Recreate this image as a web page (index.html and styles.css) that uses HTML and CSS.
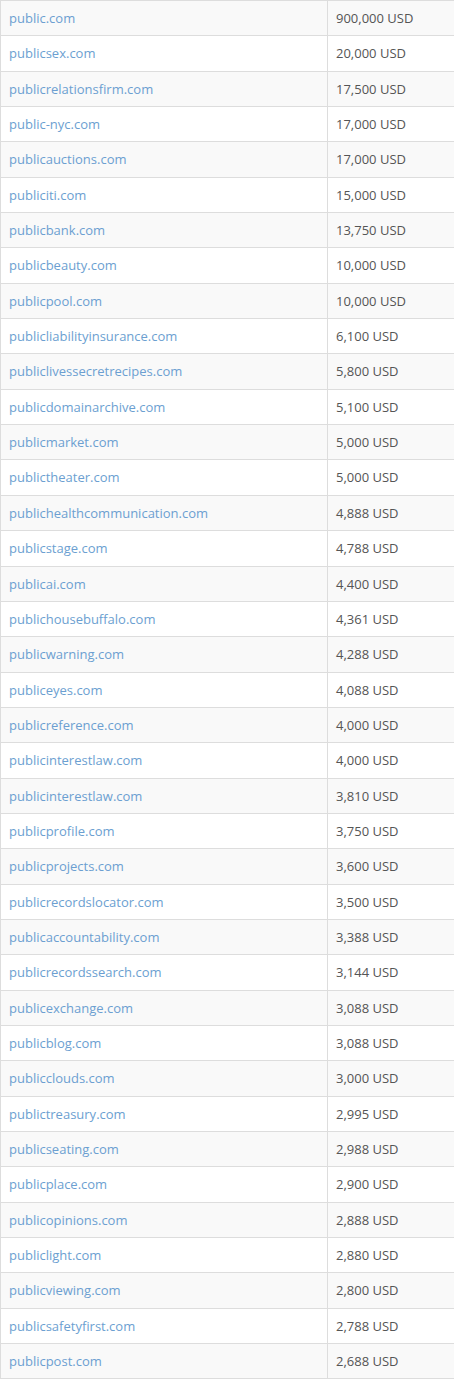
FILE: index.html
```html
<!DOCTYPE html>
<html>
<head>
<meta charset="utf-8">
<link rel="stylesheet" href="styles.css">
</head>
<body>
<table class="domains">
<tbody>
<tr><td class="name"><a href="#">public.com</a></td><td class="price">900,000 USD</td></tr>
<tr><td class="name"><a href="#">publicsex.com</a></td><td class="price">20,000 USD</td></tr>
<tr><td class="name"><a href="#">publicrelationsfirm.com</a></td><td class="price">17,500 USD</td></tr>
<tr><td class="name"><a href="#">public-nyc.com</a></td><td class="price">17,000 USD</td></tr>
<tr><td class="name"><a href="#">publicauctions.com</a></td><td class="price">17,000 USD</td></tr>
<tr><td class="name"><a href="#">publiciti.com</a></td><td class="price">15,000 USD</td></tr>
<tr><td class="name"><a href="#">publicbank.com</a></td><td class="price">13,750 USD</td></tr>
<tr><td class="name"><a href="#">publicbeauty.com</a></td><td class="price">10,000 USD</td></tr>
<tr><td class="name"><a href="#">publicpool.com</a></td><td class="price">10,000 USD</td></tr>
<tr><td class="name"><a href="#">publicliabilityinsurance.com</a></td><td class="price">6,100 USD</td></tr>
<tr><td class="name"><a href="#">publiclivessecretrecipes.com</a></td><td class="price">5,800 USD</td></tr>
<tr><td class="name"><a href="#">publicdomainarchive.com</a></td><td class="price">5,100 USD</td></tr>
<tr><td class="name"><a href="#">publicmarket.com</a></td><td class="price">5,000 USD</td></tr>
<tr><td class="name"><a href="#">publictheater.com</a></td><td class="price">5,000 USD</td></tr>
<tr><td class="name"><a href="#">publichealthcommunication.com</a></td><td class="price">4,888 USD</td></tr>
<tr><td class="name"><a href="#">publicstage.com</a></td><td class="price">4,788 USD</td></tr>
<tr><td class="name"><a href="#">publicai.com</a></td><td class="price">4,400 USD</td></tr>
<tr><td class="name"><a href="#">publichousebuffalo.com</a></td><td class="price">4,361 USD</td></tr>
<tr><td class="name"><a href="#">publicwarning.com</a></td><td class="price">4,288 USD</td></tr>
<tr><td class="name"><a href="#">publiceyes.com</a></td><td class="price">4,088 USD</td></tr>
<tr><td class="name"><a href="#">publicreference.com</a></td><td class="price">4,000 USD</td></tr>
<tr><td class="name"><a href="#">publicinterestlaw.com</a></td><td class="price">4,000 USD</td></tr>
<tr><td class="name"><a href="#">publicinterestlaw.com</a></td><td class="price">3,810 USD</td></tr>
<tr><td class="name"><a href="#">publicprofile.com</a></td><td class="price">3,750 USD</td></tr>
<tr><td class="name"><a href="#">publicprojects.com</a></td><td class="price">3,600 USD</td></tr>
<tr><td class="name"><a href="#">publicrecordslocator.com</a></td><td class="price">3,500 USD</td></tr>
<tr><td class="name"><a href="#">publicaccountability.com</a></td><td class="price">3,388 USD</td></tr>
<tr><td class="name"><a href="#">publicrecordssearch.com</a></td><td class="price">3,144 USD</td></tr>
<tr><td class="name"><a href="#">publicexchange.com</a></td><td class="price">3,088 USD</td></tr>
<tr><td class="name"><a href="#">publicblog.com</a></td><td class="price">3,088 USD</td></tr>
<tr><td class="name"><a href="#">publicclouds.com</a></td><td class="price">3,000 USD</td></tr>
<tr><td class="name"><a href="#">publictreasury.com</a></td><td class="price">2,995 USD</td></tr>
<tr><td class="name"><a href="#">publicseating.com</a></td><td class="price">2,988 USD</td></tr>
<tr><td class="name"><a href="#">publicplace.com</a></td><td class="price">2,900 USD</td></tr>
<tr><td class="name"><a href="#">publicopinions.com</a></td><td class="price">2,888 USD</td></tr>
<tr><td class="name"><a href="#">publiclight.com</a></td><td class="price">2,880 USD</td></tr>
<tr><td class="name"><a href="#">publicviewing.com</a></td><td class="price">2,800 USD</td></tr>
<tr><td class="name"><a href="#">publicsafetyfirst.com</a></td><td class="price">2,788 USD</td></tr>
<tr><td class="name"><a href="#">publicpost.com</a></td><td class="price">2,688 USD</td></tr>
</tbody>
</table>
</body>
</html>
```

FILE: styles.css
```css
html, body {
  margin: 0;
  padding: 0;
  background: #ffffff;
}
.domains {
  border-collapse: collapse;
  width: 100%;
  table-layout: fixed;
  font-family: "Open Sans", "Liberation Sans", sans-serif;
  font-size: 13px;
  color: #555555;
}
.domains tr:nth-child(odd) td {
  background: #f9f9f9;
}
.domains td {
  border: 1px solid #dddddd;
  padding: 8px 8px;
  line-height: 18.35px;
  vertical-align: top;
  white-space: nowrap;
  overflow: hidden;
}
.domains td.name {
  width: 310px;
}
.domains td.price {
  border-right: none;
}
.domains a {
  color: #6c9fd1;
  text-decoration: none;
}
```
